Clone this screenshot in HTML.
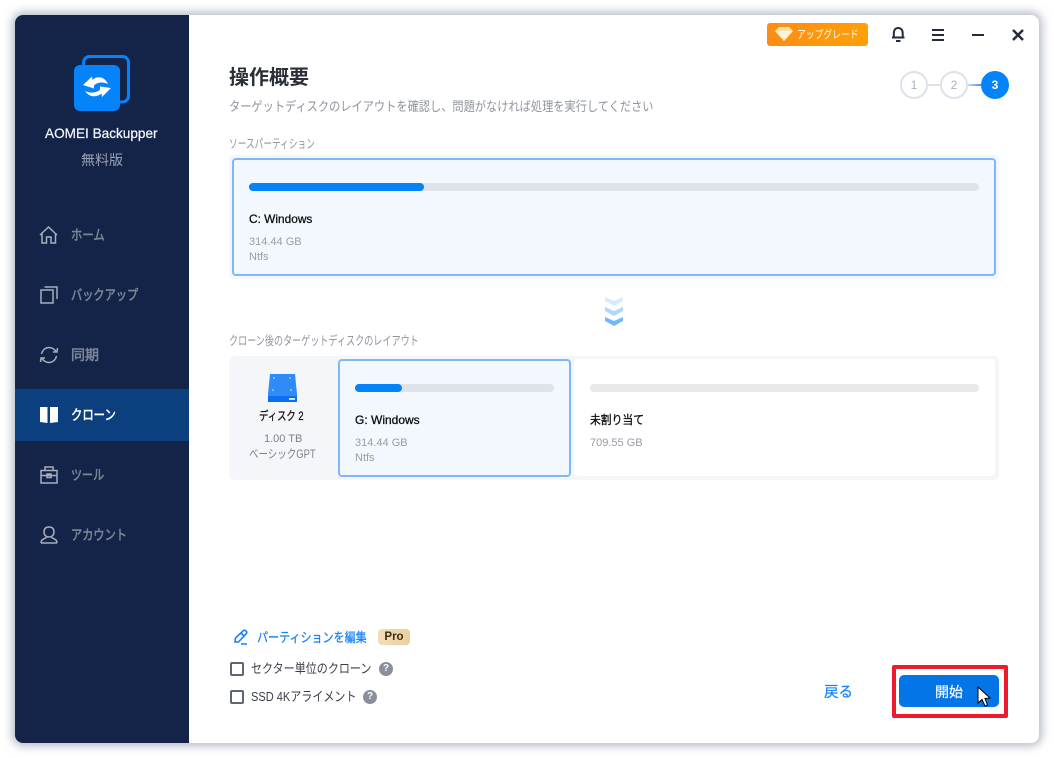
<!DOCTYPE html>
<html lang="ja">
<head>
<meta charset="utf-8">
<style>
html,body{margin:0;padding:0;width:1054px;height:758px;overflow:hidden;background:#fff;}
body{position:relative;font-family:"Liberation Sans","Noto Sans CJK JP",sans-serif;}
.a{position:absolute;white-space:nowrap;line-height:1;transform-origin:0 50%;}
.m{-webkit-text-stroke:.25px currentColor;}
svg{position:absolute;overflow:visible;}
#win{position:absolute;left:15px;top:15px;width:1024px;height:728px;background:#fff;border-radius:8px;box-shadow:0 0 9px 3px rgba(110,120,145,.5);}
#side{position:absolute;left:15px;top:15px;width:174px;height:728px;background:#132448;border-radius:8px 0 0 8px;}
.nav{position:absolute;left:71px;font-size:14px;color:#7c8697;line-height:20px;white-space:nowrap;transform-origin:0 50%;-webkit-text-stroke:.55px currentColor;}
.card{position:absolute;box-sizing:border-box;}
.sel{background:#f2f8fe;border:2px solid #7db8fb;border-radius:4px;}
.bar{position:absolute;height:8px;border-radius:4px;background:#dfe2ea;}
.fill{position:absolute;height:8px;border-radius:4px;background:#0583fb;}
.t{font-size:12px;color:#111;-webkit-text-stroke:.3px currentColor;}
.g{font-size:11px;color:#9a9ca6;}
.step{position:absolute;top:71px;width:28px;height:28px;box-sizing:border-box;border-radius:50%;border:2px solid #dce1ea;color:#a9afbc;font-size:12px;text-align:center;line-height:24px;background:#fff;}
.cb{position:absolute;left:230px;width:14px;height:14px;box-sizing:border-box;border:2px solid #5f6571;border-radius:2px;}
.q{position:absolute;width:14px;height:14px;border-radius:50%;background:#8a8f9c;color:#fff;font-size:10px;font-weight:700;text-align:center;line-height:14px;}
</style>
</head>
<body>
<div id="win"></div>
<div id="side"></div>

<!-- logo -->
<svg style="left:0;top:0" width="190" height="130" viewBox="0 0 190 130">
  <rect x="83.500" y="56.500" width="45" height="45.500" rx="6" fill="none" stroke="#0583fb" stroke-width="3"/>
  <rect x="74" y="65" width="46" height="46" rx="6" fill="#0583fb"/>
  <path d="M83 85 L92 76.500 L92.500 80 C97 75.500 104.500 76.500 108 84 C103 81.500 97 82 94 85.500 L94 88.500 Z" fill="#fff"/>
  <path d="M111 88 L102 97 L101.500 93.500 C96 98 89 97 85 91 C90 93.500 97 93 100 89.500 L100 86.500 Z" fill="#fff"/>
</svg>
<div class="a m" style="left:45px;top:126px;font-size:13.600px;color:#f2f5fa;line-height:16px;">AOMEI Backupper</div>
<div class="a" style="left:15px;width:174px;text-align:center;top:152px;font-size:14px;color:#99a2b2;line-height:16px;">無料版</div>

<!-- nav -->
<div style="position:absolute;left:15px;top:389px;width:174px;height:52px;background:#0c3f7d;"></div>
<svg style="left:0;top:0" width="190" height="560" viewBox="0 0 190 560" fill="none" stroke="#a7afbe" stroke-width="1.500">
  <path d="M40 235 L48.500 227 L57 235 M42 233.500 V243 H46.500 V237 H51 V243 H55.500 V233.500"/>
  <path d="M41 290 H53 V303 H41 Z M44.500 287 H57 V299"/>
  <path d="M41.500 354 C42.500 349.500 46 347.500 49 347.500 C52 347.500 55 349.500 56 351.500 M56.500 356 C55.500 360.500 52 362.500 49 362.500 C46 362.500 43 360.500 42 358.500"/>
  <path d="M53 352 L57 352 L57.500 348 M45 358 L41 358 L40.500 362"/>
  <path d="M41 470.500 H57 V483 H41 Z M45 470.500 V467 H53 V470.500 M41 475.500 H57 M47 474 H51 V477.500 H47 Z"/>
  <path d="M44 532 C44 528.500 46 527 49 527 C52 527 54 528.500 54 532 C54 535 52 537 49 537 C46 537 44 535 44 532 Z M41 543 C41 539 45 538.500 46.500 537.500 M57 543 C57 539 53 538.500 51.500 537.500 M41 543 H57"/>
  <path d="M40 407 H47.500 V423 L40 422 Z M58 407 H50 V423 L58 422 Z" fill="#fff" stroke="none"/>
</svg>
<div class="nav" style="top:225px;transform:scaleX(.81);">ホーム</div>
<div class="nav" style="top:285px;transform:scaleX(.8);">バックアップ</div>
<div class="nav" style="top:345px;">同期</div>
<div class="nav" style="top:405px;color:#fff;transform:scaleX(.81);">クローン</div>
<div class="nav" style="top:465px;transform:scaleX(.79);">ツール</div>
<div class="nav" style="top:525px;transform:scaleX(.8);">アカウント</div>

<!-- top bar -->
<div style="position:absolute;left:767px;top:23px;width:101px;height:23px;border-radius:3px;background:linear-gradient(90deg,#fd8d14,#fea006);"></div>
<svg style="left:0;top:0" width="1054" height="60" viewBox="0 0 1054 60">
  <path d="M775 31 L779 27 H789 L793 31 L784 41 Z" fill="#ffe2a6"/>
  <path d="M775 31 H793 L784 41 Z" fill="#fff3d6"/>
  <g fill="none" stroke="#232b3c" stroke-width="2">
    <path d="M892 37.500 H904.500 M893.800 37 V33.500 C893.800 30 895.500 28 898.200 28 C901 28 902.700 30 902.700 33.500 V37"/>
    <path d="M896 41 H900.500"/>
    <path d="M932 30 H944 M932 35 H944 M932 40 H944"/>
    <path d="M972 35 H984"/>
    <path d="M1013 30 L1023 40 M1023 30 L1013 40" stroke-width="2.400"/>
  </g>
</svg>
<div class="a" style="left:797px;top:29px;font-size:11px;color:#fff;line-height:12px;transform:scaleX(.8);">アップグレード</div>

<!-- steps -->
<div style="position:absolute;left:926px;top:84px;width:30px;height:2px;background:#dce1ea;"></div>
<div style="position:absolute;left:966px;top:84px;width:20px;height:2px;background:linear-gradient(90deg,#dce1ea,#0583fb);"></div>
<div class="step" style="left:900px;">1</div>
<div class="step" style="left:940px;">2</div>
<div class="step" style="left:981px;background:#0583fb;border-color:#0583fb;color:#fff;font-weight:700;">3</div>

<!-- heading -->
<div class="a" style="left:229px;top:67px;font-size:20px;font-weight:700;color:#2b2f38;line-height:22px;">操作概要</div>
<div class="a" style="left:229px;top:98px;font-size:13.300px;color:#8f949e;line-height:18px;transform:scaleX(.843);">ターゲットディスクのレイアウトを確認し、問題がなければ処理を実行してください</div>
<div class="a" style="left:229px;top:136px;font-size:12.500px;color:#8f949e;line-height:16px;transform:scaleX(.695);">ソースパーティション</div>

<!-- source -->
<div style="position:absolute;left:229px;top:155px;width:770px;height:124px;background:#f5f6f9;border-radius:4px;"></div>
<div class="card sel" style="left:232px;top:158px;width:764px;height:118px;"></div>
<div class="bar" style="left:249px;top:183px;width:730px;"></div>
<div class="fill" style="left:249px;top:183px;width:175px;"></div>
<div class="a t" style="left:249px;top:212px;line-height:14px;transform:scaleX(.99);">C: Windows</div>
<div class="a g" style="left:249px;top:235px;line-height:14px;">314.44 GB</div>
<div class="a g" style="left:249px;top:250px;line-height:14px;">Ntfs</div>

<!-- chevrons -->
<svg style="left:0;top:0" width="1054" height="340" viewBox="0 0 1054 340">
  <path d="M605 297 L614 301 L623 297 V301 L614 306 L605 301 Z" fill="#d8ebfe"/>
  <path d="M605 307 L614 311 L623 307 V311 L614 316 L605 311 Z" fill="#b0d7fd"/>
  <path d="M605 317 L614 321 L623 317 V321 L614 326 L605 321 Z" fill="#71b8fc"/>
</svg>

<div class="a" style="left:229px;top:333px;font-size:12.500px;color:#8f949e;line-height:16px;transform:scaleX(.727);">クローン後のターゲットディスクのレイアウト</div>

<!-- target -->
<div style="position:absolute;left:229px;top:356px;width:770px;height:124px;background:#f5f6f9;border-radius:5px;"></div>
<svg style="left:0;top:0" width="340" height="410" viewBox="0 0 340 410">
  <path d="M270 374 H295 L297 394 V402 H268 V394 Z" fill="#2e8bf8"/>
  <path d="M268 396 H297 V402 H268 Z" fill="#0a6ff0"/>
  <rect x="289" y="398" width="6" height="2" fill="#d6e8ff"/>
  <g fill="#7db8fb"><rect x="273" y="377" width="2" height="2"/><rect x="289" y="377" width="2" height="2"/><rect x="272" y="389" width="2" height="2"/><rect x="290" y="389" width="2" height="2"/></g>
</svg>
<div class="a t" style="left:259px;top:409px;line-height:14px;transform:scaleX(.78);">ディスク 2</div>
<div class="a g" style="left:264px;top:432px;line-height:14px;color:#7d808a;">1.00 TB</div>
<div class="a g" style="left:249px;top:447px;line-height:14px;color:#7d808a;font-size:12px;transform:scaleX(.79);">ベーシックGPT</div>

<div class="card sel" style="left:338px;top:359px;width:233px;height:118px;"></div>
<div class="bar" style="left:355px;top:384px;width:199px;"></div>
<div class="fill" style="left:355px;top:384px;width:47px;"></div>
<div class="a t" style="left:355px;top:413px;line-height:14px;transform:scaleX(1);">G: Windows</div>
<div class="a g" style="left:355px;top:436px;line-height:14px;">314.44 GB</div>
<div class="a g" style="left:355px;top:451px;line-height:14px;">Ntfs</div>

<div class="card" style="left:574px;top:359px;width:421px;height:117px;background:#fff;border-radius:4px;"></div>
<div class="bar" style="left:590px;top:384px;width:389px;background:#e8e9eb;"></div>
<div class="a t" style="left:590px;top:413px;line-height:14px;transform:scaleX(.9);">未割り当て</div>
<div class="a g" style="left:590px;top:436px;line-height:14px;">709.55 GB</div>

<!-- bottom left -->
<svg style="left:0;top:0" width="260" height="650" viewBox="0 0 260 650" fill="none" stroke="#1683f5" stroke-width="1.600">
  <path d="M235 642 L235.500 638 L243 631 C244 630 245 630 246 631 C247 632 247 633 246 634 L238.500 642 Z M241 633 L244.500 636.500 M241 644 H247"/>
</svg>
<div class="a m" style="left:257px;top:629px;font-size:13.300px;color:#1683f5;line-height:17px;transform:scaleX(.83);">パーティションを編集</div>
<div class="a" style="left:378px;top:629px;width:32px;height:16px;border-radius:4px;background:linear-gradient(90deg,#f3dcb8,#eccf9e);color:#3c2c12;font-size:11.500px;font-weight:700;text-align:center;line-height:16px;">Pro</div>

<div class="cb" style="top:662px;"></div>
<div class="a" style="left:251px;top:661px;font-size:13.300px;color:#3a3e48;line-height:16px;transform:scaleX(.83);">セクター単位のクローン</div>
<div class="q" style="left:379px;top:662px;">?</div>

<div class="cb" style="top:690px;"></div>
<div class="a" style="left:251px;top:689px;font-size:13.300px;color:#3a3e48;line-height:16px;transform:scaleX(.83);">SSD 4Kアライメント</div>
<div class="q" style="left:363px;top:690px;">?</div>

<!-- bottom right -->
<div class="a m" style="left:824px;top:684px;font-size:14.500px;color:#1683f5;line-height:18px;">戻る</div>
<div style="position:absolute;left:892px;top:665px;width:116px;height:53px;box-sizing:border-box;border:4px solid #ec1c2c;border-radius:2px;"></div>
<div style="position:absolute;left:899px;top:675px;width:100px;height:32px;background:#0475e6;border-radius:5px;"></div>
<div class="a m" style="left:935px;top:684px;font-size:14px;color:#f2f7ff;line-height:16px;">開始</div>
<svg style="left:0;top:0" width="1054" height="758" viewBox="0 0 1054 758">
  <path d="M978 687 V703 L982 699.500 L985 706 L987.500 705 L985 698.500 L990 698 Z" fill="#fff" stroke="#000" stroke-width="1"/>
</svg>
</body>
</html>
